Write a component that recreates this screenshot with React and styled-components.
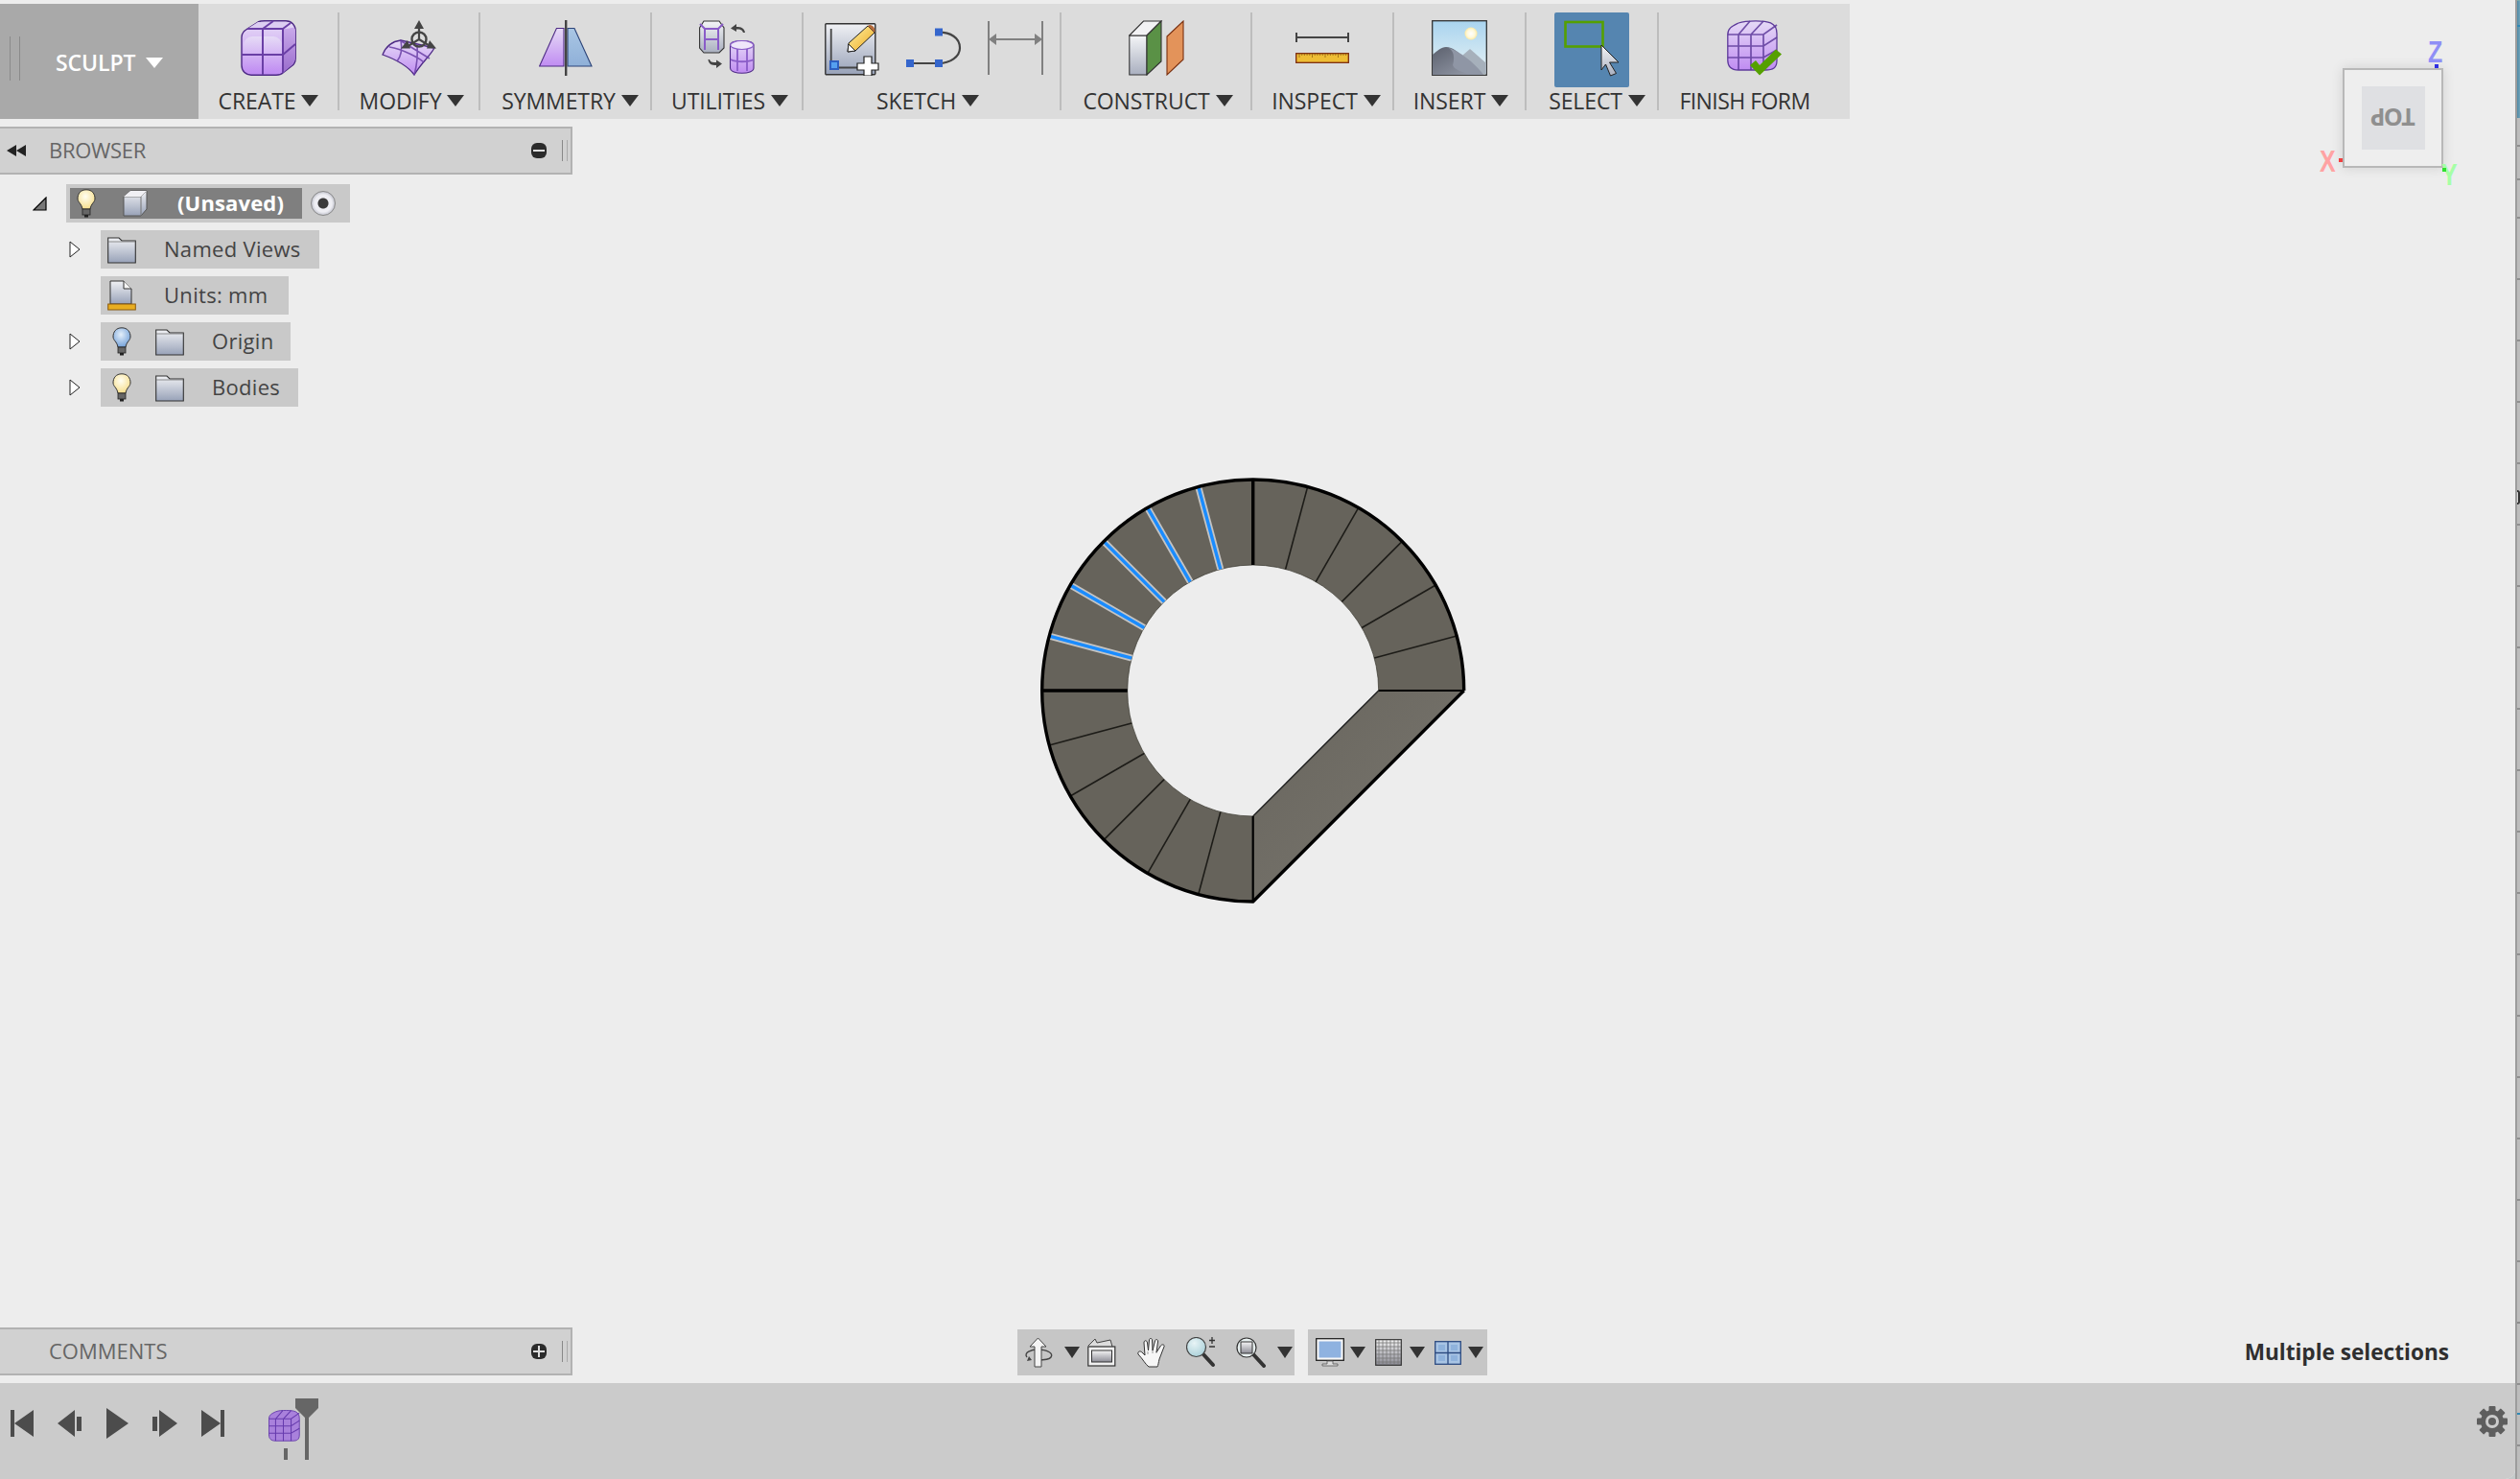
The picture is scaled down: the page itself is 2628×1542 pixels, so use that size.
import React from "react";
import styled, { createGlobalStyle } from "styled-components";

const Global = createGlobalStyle`
  html, body { margin: 0; padding: 0; background: #ededed; }
  #root { width: 2628px; height: 1542px; overflow: hidden; }
`;

const Page = styled.div`
  width: 2628px; height: 1542px; display: flex; background: #c4caca;
  font-family: "Open Sans", "Liberation Sans", sans-serif; color: #3c3c3c; overflow: hidden;
`;
const Main = styled.div`
  position: relative; width: 2623px; height: 1542px; flex: none; background: #ededed;
  display: flex; flex-direction: column; padding-top: 4px; box-sizing: border-box;
  border-bottom-right-radius: 10px; overflow: hidden;
`;
const Edge = styled.div`
  flex: 1; display: flex; flex-direction: column; border-left: 2px solid #9c9c9c;
`;
const EdgeCap = styled.div`
  height: 123px; flex: none; background: linear-gradient(90deg, #4f8aa6, #6ea2b8);
  border-top: 1px solid #7aa; box-sizing: border-box; position: relative;
  &::after { content: ""; position: absolute; left: 0; right: 0; top: 25px; height: 2px; background: #2f88b5; }
`;
const EdgeRest = styled.div`
  flex: 1; position: relative;
  background: repeating-linear-gradient(180deg, #bdbdbd 0 62px, #8f8f8f 62px 64px);
  background-position: 0 41px;
`;
const EdgeMark = styled.span`
  position: absolute; left: 0; right: 0; top: ${p => p.$y - 123}px; height: 2px; background: ${p => p.$c};
`;
const EdgeNotch = styled.span`
  position: absolute; left: 0; right: 0; top: ${511 - 123}px; height: 15px; box-sizing: border-box;
  border: 2px solid #333; border-left: 0; border-radius: 0 5px 5px 0; background: #d8d8d8;
`;

/* ---------- toolbar ---------- */
const Toolbar = styled.div`
  width: 1929px; height: 120px; flex: none; display: flex; background: #dcdcdc;
`;
const Sculpt = styled.div`
  width: 207px; height: 120px; flex: none; background: #a9a9a9; display: flex; align-items: center;
  color: #fff; font-size: 23px; font-weight: 600; padding-left: 10px; box-sizing: border-box;
`;
const Grip = styled.span`
  width: 9px; height: 46px; flex: none; margin-top: -6px; margin-right: 37px;
  border-left: 1px solid #8a8a8a; border-right: 1px solid #8a8a8a;
`;
const SculptLabel = styled.span`
  margin-top: 2px; letter-spacing: -0.1px; display: flex; align-items: center;
`;
const Caret = styled.span`
  display: inline-block; flex: none; width: 0; height: 0; margin-left: ${p => p.$ml ?? 6}px;
  border-left: ${p => p.$w / 2}px solid transparent; border-right: ${p => p.$w / 2}px solid transparent;
  border-top: ${p => p.$h}px solid ${p => p.$color || "#333"};
`;
const Group = styled.div`
  width: ${p => p.$w}px; height: 102px; margin-top: 9px; flex: none; box-sizing: border-box;
  display: flex; flex-direction: column; align-items: center;
  border-right: ${p => (p.$last ? "0" : "2px solid #bdbdbd")};
`;
const IconRow = styled.div`
  height: 78px; flex: none; display: flex; align-items: flex-start; gap: ${p => p.$gap || 0}px;
  padding-top: ${p => (p.$flush ? 0 : 8)}px; box-sizing: border-box;
  padding-left: ${p => p.$pl || 0}px;
  & > svg { display: block; flex: none; }
`;
const SelectBox = styled.div`
  width: 78px; height: 78px; background: #5585b0; border-radius: 2px;
  & > svg { display: block; }
`;
const Label = styled.div`
  height: 24px; line-height: 24px; font-size: 23px; color: #333; display: flex; align-items: center;
  white-space: nowrap; padding-right: ${p => p.$pr || 0}px; padding-left: ${p => p.$pl || 0}px;
  letter-spacing: ${p => p.$ls ?? -0.1}px; margin-top: 2px;
`;

/* ---------- panels ---------- */
const Panel = styled.div`
  width: 597px; height: 50px; flex: none; box-sizing: border-box; background: #d1d1d1;
  border: 2px solid #b2b2b2; border-left: 0; display: flex; align-items: center;
  margin-top: ${p => p.$mt || 0}px; color: #666; font-size: 22px;
`;
const PanelLead = styled.span`
  width: 51px; flex: none; display: flex; padding-left: 7px; box-sizing: border-box;
`;
const PanelTitle = styled.span`flex: 1; margin-top: -2px; letter-spacing: ${p => p.$ls || 0}px;`;
const PanelBtn = styled.span`
  width: 16px; height: 16px; border-radius: 6px; background: #2b2b2b; flex: none; margin-right: 16px; position: relative;
  &::before { content: ""; position: absolute; left: 2px; right: 2px; top: 7px; height: 2px; background: #ddd; }
  &::after { content: ""; position: absolute; top: 2px; bottom: 2px; left: 7px; width: 2px; background: #ddd; display: ${p => (p.$plus ? "block" : "none")}; }
`;
const PanelGrip = styled.span`
  width: 4px; height: 22px; flex: none; margin-right: 3px; border-left: 1px solid #888; border-right: 1px solid #aaa;
`;

const Tree = styled.div`
  margin-top: 10px; display: flex; flex-direction: column; gap: 8px; font-size: 22px;
`;
const TreeLine = styled.div`
  display: flex; align-items: center; height: 40px; padding-left: ${p => p.$pl}px;
`;
const Twisty = styled.span`
  width: ${p => p.$w}px; flex: none; display: flex;
  & > svg { display: block; }
`;
const RootRow = styled.div`
  width: 296px; height: 40px; background: #c9c9c9; display: flex; align-items: center; padding-left: 4px; box-sizing: border-box;
`;
const RootName = styled.div`
  width: 242px; height: 32px; background: #7f7f7f; color: #fff; font-weight: 700; display: flex; align-items: center; flex: none;
  padding-left: 2px; box-sizing: border-box;
  letter-spacing: 0.15px;
`;
const Row = styled.div`
  width: ${p => p.$w}px; height: 40px; background: #c9c9c9; display: flex; align-items: center;
  padding-left: 7px; box-sizing: border-box; color: #444; letter-spacing: 0.3px;
`;
const RowText = styled.span`margin-top: -2px;`;
const Slot = styled.span`
  width: 30px; flex: none; display: flex; justify-content: center; margin-right: ${p => p.$mr || 0}px;
  & > svg { display: block; }
`;
const Radio = styled.span`
  width: 26px; height: 26px; border-radius: 50%; flex: none; margin-left: 9px; box-sizing: border-box;
  background: radial-gradient(circle, #3a3a3a 0 5px, #eeeef3 6px 9px, #b9bbc6 13px); border: 1px solid #8a8a8a;
`;

/* ---------- bottom ---------- */
const BottomRow = styled.div`
  margin-top: auto; margin-bottom: 8px; display: flex; align-items: center; height: 50px; flex: none;
`;
const NavGroup = styled.div`
  width: ${p => p.$w}px; height: 48px; flex: none; background: #c6c6c6; display: flex; align-items: center;
  margin-left: ${p => p.$ml}px; margin-top: 2px;
`;
const NavItem = styled.span`
  flex: none; display: flex; margin-left: ${p => p.$ml}px;
  & > svg { display: block; }
`;
const Status = styled.div`
  margin-left: auto; padding-right: 69px; font-size: 22.6px; font-weight: 700; color: #2f2f2f; margin-top: 0;
`;
const Timeline = styled.div`
  height: 100px; flex: none; background: #cbcbcb; display: flex; align-items: flex-start;
  padding: 26px 8px 0 11px; box-sizing: border-box; gap: 25px;
  & > svg { display: block; flex: none; }
`;
const Marker = styled.svg`margin: -10px 0 0 21px;`;
const Gear = styled.svg`margin: -2px 0 0 auto;`;

/* ---------- canvas items ---------- */
const ModelSvg = styled.svg`position: absolute; left: 1060px; top: 480px;`;
const Cube = styled.div`
  position: absolute; left: 2443px; top: 71px; width: 105px; height: 104px; box-sizing: border-box;
  border: 2px solid #b8b8b8; background: #eeeeee; box-shadow: 0 0 12px rgba(0,0,0,.12);
  display: flex; align-items: center; justify-content: center;
`;
const CubeFace = styled.div`
  width: 66px; height: 66px; background: #dfe0e3; display: flex; align-items: center; justify-content: center;
  color: #8f8f8f; font-size: 25px; font-weight: 700; transform: rotate(180deg); letter-spacing: -1.5px;
  font-family: "Open Sans", sans-serif; line-height: 1;
`;
const Axis = styled.span`
  position: absolute; left: ${p => p.$x}px; top: ${p => p.$y}px; color: ${p => p.$c};
  font: 700 32px/1 "Liberation Sans", sans-serif; transform: scaleX(.78); transform-origin: 0 0;
`;
const Dot = styled.span`
  position: absolute; left: ${p => p.$x}px; top: ${p => p.$y}px; width: 4px; height: 4px; background: ${p => p.$c};
`;
const DefsSvg = styled.svg`position: absolute; width: 0; height: 0;`;

const Defs = () => (
  <DefsSvg>
    <defs>
      <linearGradient id="pg" x1="0" y1="0" x2="0" y2="1"><stop offset="0" stopColor="#e6dbf6" /><stop offset="1" stopColor="#c08cf2" /></linearGradient>
      <linearGradient id="pd" x1="0" y1="0" x2="0" y2="1"><stop offset="0" stopColor="#c9a9ea" /><stop offset="1" stopColor="#9a6ccd" /></linearGradient>
      <linearGradient id="bl" x1="0" y1="0" x2="0" y2="1"><stop offset="0" stopColor="#a9c6e4" /><stop offset="1" stopColor="#8fb0d8" /></linearGradient>
      <linearGradient id="sv" x1="0" y1="0" x2="0" y2="1"><stop offset="0" stopColor="#f4f5f7" /><stop offset="1" stopColor="#a9afbf" /></linearGradient>
      <linearGradient id="sk" x1="0" y1="0" x2="0" y2="1"><stop offset="0" stopColor="#a9d4ef" /><stop offset="1" stopColor="#e8f2f4" /></linearGradient>
      <linearGradient id="mt" x1="0" y1="0" x2="1" y2="1"><stop offset="0" stopColor="#5c616e" /><stop offset="1" stopColor="#9aa0ae" /></linearGradient>
      <linearGradient id="ye" x1="0" y1="0" x2="1" y2="1"><stop offset="0" stopColor="#fff4a8" /><stop offset="1" stopColor="#eea81e" /></linearGradient>
      <linearGradient id="gr" x1="0" y1="0" x2="0" y2="1"><stop offset="0" stopColor="#f4f4f4" /><stop offset="1" stopColor="#8c8c96" /></linearGradient>
      <linearGradient id="gd" x1="0" y1="0" x2="0" y2="1"><stop offset="0" stopColor="#f0f1f4" /><stop offset="1" stopColor="#98a2b8" /></linearGradient>
      <linearGradient id="ds" x1="0" y1="0" x2="1" y2="1"><stop offset="0" stopColor="#68655d" /><stop offset="1" stopColor="#7a7770" /></linearGradient>
      <radialGradient id="by" cx=".45" cy=".35" r=".7"><stop offset="0" stopColor="#fffef2" /><stop offset="1" stopColor="#f6dc84" /></radialGradient>
      <radialGradient id="bb" cx=".45" cy=".35" r=".7"><stop offset="0" stopColor="#e4effa" /><stop offset="1" stopColor="#6c9cd6" /></radialGradient>
      <radialGradient id="sun" cx=".5" cy=".5" r=".5"><stop offset="0" stopColor="#fff" /><stop offset=".65" stopColor="#fff8d8" /><stop offset="1" stopColor="#ffe9a0" /></radialGradient>
      <radialGradient id="gl" cx=".4" cy=".3" r=".8"><stop offset="0" stopColor="#e8f4f6" /><stop offset="1" stopColor="#a4cdd6" /></radialGradient>
    </defs>
  </DefsSvg>
);

/* ---------- toolbar icons ---------- */
const P = "#6a3fa6";
const CreateIcon = () => (
  <svg width="58" height="58" viewBox="0 0 58 58">
    <path d="M1 18C1 13 4 11 7 9L18 2C20 1 22 .8 25 .8H47C53 .8 57.2 5 57.2 11V40C57.2 44 56 46 53 48L44 55C42 57 40 57.2 37 57.2H11C5 57.2 1 53 1 47Z" fill="url(#pg)" stroke="#4d2a85" strokeWidth="1.4" />
    <path d="M44 9H47C52 9 57 5 57 11V40C57 44 50 50 44 55Z" fill="url(#pd)" />
    <path d="M7 9L18 2H50L44 9Z" fill="#dccdf2" />
    <rect x="3" y="17" width="40" height="38" rx="9" fill="url(#pg)" />
    <path d="M1 36H44L57 25M23 9V57M23 9L34 1M7 9H44V55M44 9L52 3" fill="none" stroke={P} strokeWidth="2" />
  </svg>
);
const ModifyIcon = () => (
  <svg width="57" height="58" viewBox="0 0 57 58">
    <path d="M1 36C5 26 12 22 20 21L55 29C50 38 41 45 34 57C26 46 12 40 1 36Z" fill="url(#pg)" stroke="#4d2a85" strokeWidth="1.3" />
    <path d="M20 21C22 32 20 38 16 43M37 25C38 40 36 50 34 57M8 28C22 30 40 40 44 44M19 21L50 40" fill="none" stroke={P} strokeWidth="1.6" opacity=".85" />
    <circle cx="39" cy="20" r="7.5" fill="none" stroke="#444" strokeWidth="2.4" />
    <path d="M39 6V20L26 28M39 20L52 28" fill="none" stroke="#444" strokeWidth="2.2" />
    <path d="M39 0L44 9H34ZM20 29.5L30 29.5L27 21ZM57 29.5L47 29.5L50 21Z" fill="#444" />
  </svg>
);
const SymmetryIcon = () => (
  <svg width="56" height="58" viewBox="0 0 56 58">
    <path d="M.6 48L18.4 8.5H26V48Z" fill="url(#pg)" stroke="#4d2a85" strokeWidth="1.1" />
    <path d="M30 8.5H37L55 48H30Z" fill="url(#bl)" stroke="#2b4378" strokeWidth="1.1" />
    <rect x="27" width="2.4" height="58" fill="#444" />
  </svg>
);
const UtilitiesIcon = () => (
  <svg width="58" height="56" viewBox="0 0 58 56">
    <path d="M5 1H21L26 8V29L21 34H5L.6 29V8Z" fill="url(#sv)" stroke="#333" strokeWidth="1.1" />
    <path d="M6 9H20V31M6 9V31M6 20H20M1 4L6 9M25 4L20 9" fill="none" stroke="#8a5cc8" strokeWidth="2" />
    <path d="M39 4L33 8.5L39 12V9.5C43 9.5 45 10 46 13H48C47 8 44 7 39 7Z" fill="#444" />
    <path d="M18 50L24 45.5L18 41.5V44C14 44 12 44 11 41H9.5C10 46 13 47 18 47Z" fill="#444" />
    <path d="M32.5 26C32.5 20 57 20 57 26V50C57 57 32.5 57 32.5 50Z" fill="url(#pg)" stroke="#4d2a85" strokeWidth="1.1" />
    <ellipse cx="44.7" cy="26" rx="12" ry="4.5" fill="#efe6fa" stroke="#8a5cc8" strokeWidth="1.2" />
    <path d="M40 30V53M50 30V53M33 41C38 44 52 44 57 41" fill="none" stroke="#8a5cc8" strokeWidth="1.8" />
  </svg>
);
const SketchIcon = () => (
  <svg width="58" height="58" viewBox="0 -3 58 58">
    <rect x=".8" y=".8" width="52" height="53" rx="1" fill="url(#gd)" stroke="#333" strokeWidth="1.4" />
    <path d="M6.7 6V46.5H36" fill="none" stroke="#444" strokeWidth="1.8" />
    <rect x="6" y="40" width="8" height="8" fill="#55a0f0" stroke="#2f5fc0" strokeWidth="2" />
    <path d="M24 30L25 21L45 3L52 10L32 29Z" fill="url(#ye)" stroke="#222" strokeWidth="1" />
    <path d="M24 30L25 22L32 29Z" fill="#fff" stroke="#222" strokeWidth="1" />
    <path d="M45 3C48 0 54 5 52 10Z" fill="#b46a3a" />
    <path d="M41 35H49V42H56V49H49V55H41V49H34V42H41Z" fill="#fff" stroke="#222" strokeWidth="1.2" />
  </svg>
);
const LineIcon = () => (
  <svg width="58" height="58" viewBox="0 0 58 58">
    <path d="M4 45H34M34 12.7C46 12.7 56 18 56 29C56 38 46 45 34 45" fill="none" stroke="#444" strokeWidth="2.2" />
    <rect x="0" y="41" width="8" height="8" fill="#3566cc" />
    <rect x="30" y="41" width="8" height="8" fill="#3566cc" />
    <rect x="30" y="8.5" width="8" height="8" fill="#3566cc" />
  </svg>
);
const DimensionIcon = () => (
  <svg width="58" height="58" viewBox="0 0 58 58">
    <path d="M1 1V57M57 1V57M6 20H52" fill="none" stroke="#808080" strokeWidth="2" />
    <path d="M1 20L9 14V26ZM57 20L49 14V26Z" fill="#808080" />
  </svg>
);
const ConstructIcon = () => (
  <svg width="58" height="58" viewBox="0 0 58 58">
    <path d="M.8 16V57H19V16Z" fill="url(#sv)" stroke="#333" strokeWidth="1.1" />
    <path d="M.8 16L15.5 1H34L19 16Z" fill="#f2f2f4" stroke="#333" strokeWidth="1.1" />
    <path d="M19 16L34 1V43L19 57Z" fill="#5a9146" stroke="#333" strokeWidth="1.1" />
    <path d="M40 17L57 1V41L40 57Z" fill="#e3935a" stroke="#7a3010" strokeWidth="1.1" />
  </svg>
);
const InspectIcon = () => (
  <svg width="56" height="58" viewBox="0 0 56 58">
    <path d="M1 13V23M1 18H55M55 13V23" fill="none" stroke="#444" strokeWidth="2" />
    <rect x=".7" y="34.7" width="54.6" height="9.6" fill="#eebd35" stroke="#7a2a10" strokeWidth="1.3" />
    <path d={Array.from({ length: 19 }, (_, i) => `M${4 + i * 2.7} 35V${i % 5 === 0 ? 39 : 37}`).join("")} stroke="#8a5a10" strokeWidth=".7" />
  </svg>
);
const InsertIcon = () => (
  <svg width="58" height="58" viewBox="0 0 58 58">
    <rect x=".7" y=".7" width="56.6" height="56.6" fill="url(#sk)" stroke="#333" strokeWidth="1.3" />
    <circle cx="41" cy="14" r="6.5" fill="url(#sun)" />
    <path d="M26 42L40 30L57 45V56H30Z" fill="#a6b0bb" />
    <path d="M1 36C6 32 10 28 15 28C22 28 28 34 33 38C44 46 50 52 54 57H1Z" fill="url(#mt)" />
    <path d="M15 28C24 30 24 40 22 47C24 52 32 54 40 57H54C46 46 30 32 15 28Z" fill="#8f96a5" />
  </svg>
);
const SelectIcon = () => (
  <svg width="78" height="78" viewBox="0 0 78 78">
    <rect x="11.5" y="10" width="39" height="25.5" fill="none" stroke="#55a000" strokeWidth="2.6" />
    <path d="M49 34L67 52H57.5L64.5 63.5L58.5 66L53.5 54L49 60Z" fill="url(#sv)" stroke="#222" strokeWidth="1" />
  </svg>
);
const FormBody = ({ fill = "url(#pg)", stroke = "#5d3a9a" }) => (
  <>
    <path d="M.8 15C.8 8 6 6 12 3C18 .8 22 .8 30 .8C42 .8 52 2 52 14V42C52 50 48 52 40 52H12C4 52 .8 48 .8 42Z" fill={fill} stroke={stroke} strokeWidth="1.3" />
    <path d="M.8 15H38L52 5M12 15V52M25 15V52M38 15V52M.8 27H38L52 18M.8 39H38L52 31M12 15L24 1M25 15L38 1" fill="none" stroke={stroke} strokeWidth="1.7" opacity=".85" />
  </>
);
const FinishIcon = () => (
  <svg width="58" height="58" viewBox="0 0 58 58">
    <FormBody />
    <path d="M24 47L34 57.5L57 35.5L51 30.5L34 47L30 42Z" fill="#55a000" />
  </svg>
);

/* ---------- tree icons ---------- */
const Bulb = ({ fill }) => (
  <svg width="20" height="30" viewBox="0 0 20 30">
    <path d="M10 .8C4 .8 1 5 1 10C1 14 5 15 6 21H14C15 15 19 14 19 10C19 5 16 .8 10 .8Z" fill={fill} stroke="#333" strokeWidth="1" />
    <rect x="6" y="21" width="8" height="6" fill="#666" stroke="#222" strokeWidth=".8" />
    <rect x="8" y="27" width="4" height="2.5" fill="#222" />
  </svg>
);
const Folder = () => (
  <svg width="30" height="30" viewBox="0 0 30 30">
    <path d="M.7 3H12L15 6H29.3V29H.7Z" fill="url(#gd)" stroke="#333" strokeWidth="1.1" />
    <path d="M.7 7H29" stroke="#777" strokeWidth=".8" />
  </svg>
);
const DocIcon = () => (
  <svg width="30" height="32" viewBox="0 0 30 32">
    <path d="M3 1H17L25 9V25H3Z" fill="url(#gd)" stroke="#333" strokeWidth="1" />
    <path d="M17 1V9H25" fill="#f4f4f4" stroke="#333" strokeWidth="1" />
    <rect x=".7" y="25" width="28.6" height="6" fill="#e8ad20" stroke="#8a5a10" strokeWidth="1" />
  </svg>
);
const SmallCube = () => (
  <svg width="26" height="28" viewBox="0 0 26 28">
    <path d="M1 7L8 1H25V20L19 27H1Z" fill="url(#gd)" stroke="#555" strokeWidth="1" />
    <path d="M1 7H19V27M19 7L25 1" fill="none" stroke="#777" strokeWidth="1" />
    <path d="M1 7L8 1H25L19 7Z" fill="#f0f0f4" />
  </svg>
);
const TriOpen = () => (
  <svg width="15" height="15" viewBox="0 0 15 15">
    <path d="M1 14L14 1V14Z" fill="#777" stroke="#000" strokeWidth="1.2" />
  </svg>
);
const TriClosed = () => (
  <svg width="12" height="18" viewBox="0 0 12 18">
    <path d="M1 1L11 9L1 17Z" fill="#fff" stroke="#222" strokeWidth="1" />
  </svg>
);

/* ---------- nav icons ---------- */
const NavCaret = () => (
  <svg width="20" height="14" viewBox="0 0 20 14"><path d="M2 1H18L10 13Z" fill="#333" /></svg>
);
const OrbitIcon = () => (
  <svg width="30" height="32" viewBox="0 0 30 32">
    <path d="M3 21C-1 16 8 13 14 13C24 13 31 17 28 21C26 24 18 24 14 24" fill="none" stroke="#444" strokeWidth="1.4" />
    <path d="M14.5 1L23 10H18V31H11V10H6Z" fill="#f4f4f4" stroke="#444" strokeWidth="1" />
    <path d="M5 20L8 24L3 25Z" fill="#444" />
  </svg>
);
const CameraIcon = () => (
  <svg width="30" height="30" viewBox="0 0 30 30">
    <path d="M1 8L8 1L10 5L24 2L26 9" fill="#ddd" stroke="#444" strokeWidth="1" />
    <rect x=".8" y="9" width="28" height="20" fill="#f0f0f0" stroke="#333" strokeWidth="1.2" />
    <rect x="4.5" y="13" width="21" height="12" fill="url(#gr)" stroke="#333" strokeWidth="1" />
  </svg>
);
const HandIcon = () => (
  <svg width="30" height="31" viewBox="0 0 30 31">
    <path d="M12 30C8 27 6 22 1 17C0 14 3 13 5 15L8 18L7 5C7 2 10 2 10.5 5L11.5 13L12.5 2C12.5 0 15.5 0 15.5 2L16 13L18.5 3C19 1 22 1 21.5 4L20 15L24.5 8C26 6 29 7 28 9L23 22C22 26 22 28 21 30Z" fill="#f6f6f6" stroke="#333" strokeWidth="1" />
    <path d="M11 17V14M16 16V13M20 16V14" stroke="#888" strokeWidth=".8" />
  </svg>
);
const ZoomIcon = () => (
  <svg width="32" height="32" viewBox="0 0 32 32">
    <path d="M17 17L28 29" stroke="#333" strokeWidth="4" strokeLinecap="round" />
    <circle cx="10.5" cy="10.5" r="10" fill="url(#gl)" stroke="#444" strokeWidth="1.2" />
    <path d="M27 0V7M24 3.5H30M24 10H30" stroke="#333" strokeWidth="1.3" />
  </svg>
);
const ZoomWinIcon = () => (
  <svg width="32" height="32" viewBox="0 0 32 32">
    <path d="M18 18L29 30" stroke="#333" strokeWidth="4" strokeLinecap="round" />
    <circle cx="11" cy="11" r="10" fill="#e8f0f0" stroke="#333" strokeWidth="1.2" />
    <rect x="5" y="5" width="12" height="12" fill="url(#gr)" stroke="#333" strokeWidth="1" />
  </svg>
);
const MonitorIcon = () => (
  <svg width="30" height="30" viewBox="0 0 30 30">
    <rect x=".7" y=".7" width="28.6" height="22.6" fill="#f8f8f8" stroke="#222" strokeWidth="1.3" />
    <rect x="3.5" y="3.5" width="23" height="17" fill="#8fb2e0" />
    <path d="M12 24H18V27H23V29H7V27H12Z" fill="#ddd" stroke="#555" strokeWidth=".8" />
  </svg>
);
const GridIcon = () => (
  <svg width="28" height="28" viewBox="0 0 28 28">
    <rect x=".7" y=".7" width="26.6" height="26.6" fill="url(#gr)" stroke="#333" strokeWidth="1.2" />
    <path d={Array.from({ length: 6 }, (_, i) => `M${4 + i * 4} 1V27M1 ${4 + i * 4}H27`).join("")} stroke="#777" strokeWidth=".8" />
  </svg>
);
const ViewsIcon = () => (
  <svg width="28" height="25" viewBox="0 0 28 25">
    <rect x=".7" y=".7" width="26.6" height="23.6" fill="#a8c4e4" stroke="#2c4a80" strokeWidth="1.3" />
    <path d="M14 1V24M1 12.5H27" stroke="#2c4a80" strokeWidth="1.3" />
    <rect x="4" y="4" width="7" height="6" fill="#8fb2dc" />
    <rect x="17" y="4" width="7" height="6" fill="#8fb2dc" />
    <rect x="4" y="15" width="7" height="6" fill="#8fb2dc" />
    <rect x="17" y="15" width="7" height="6" fill="#8fb2dc" />
  </svg>
);

/* ---------- model ---------- */
const CX = 246.7, CY = 240, RO = 220, RI = 131;
const spoke = deg => {
  const a = (deg * Math.PI) / 180;
  return [CX + RI * Math.sin(a), CY - RI * Math.cos(a), CX + RO * Math.sin(a), CY - RO * Math.cos(a)];
};
const thin = [15, 30, 45, 60, 75, 195, 210, 225, 240, 255];
const blue = [-15, -30, -45, -60, -75];
const Model = () => (
  <ModelSvg width="480" height="480" viewBox="0 0 480 480">
    <path d={`M${CX + RO} ${CY}A${RO} ${RO} 0 1 0 ${CX} ${CY + RO}L${CX} ${CY + RI}A${RI} ${RI} 0 1 1 ${CX + RI} ${CY}Z`} fill="#66635b" />
    <path d={`M${CX + RI} ${CY}L${CX + RO} ${CY}L${CX} ${CY + RO}L${CX} ${CY + RI}Z`} fill="url(#ds)" />
    <path d={`M${CX + RI} ${CY}A${RI} ${RI} 0 1 0 ${CX} ${CY + RI}`} fill="none" stroke="#39372f" strokeWidth="1" opacity=".7" />
    <path d={`M${CX + RI} ${CY}L${CX} ${CY + RI}`} stroke="#222" strokeWidth="1.5" />
    {thin.map(d => {
      const [a, b, c, e] = spoke(d);
      return <line key={d} x1={a} y1={b} x2={c} y2={e} stroke="#1d1c18" strokeWidth="1.6" />;
    })}
    {blue.map(d => {
      const [a, b, c, e] = spoke(d);
      return (
        <g key={d}>
          <line x1={a} y1={b} x2={c} y2={e} stroke="#c4c4c4" strokeWidth="7" />
          <line x1={a} y1={b} x2={c} y2={e} stroke="#1a8cff" strokeWidth="3.4" />
        </g>
      );
    })}
    <path d={`M${CX} ${CY - RI}V${CY - RO}M${CX - RI} ${CY}H${CX - RO}`} stroke="#000" strokeWidth="3.4" />
    <path d={`M${CX + RI} ${CY}H${CX + RO}M${CX} ${CY + RI}V${CY + RO}`} stroke="#000" strokeWidth="2.2" />
    <path d={`M${CX + RO} ${CY}A${RO} ${RO} 0 1 0 ${CX} ${CY + RO}L${CX + RO} ${CY}`} fill="none" stroke="#000" strokeWidth="3.4" strokeLinejoin="round" />
  </ModelSvg>
);

const tools = [
  { name: "CREATE", w: 147, lpl: 1, icons: <CreateIcon />, caret: true },
  { name: "MODIFY", w: 147, lpl: 6, icons: <ModifyIcon />, caret: true },
  { name: "SYMMETRY", w: 179, lpl: 10, icons: <SymmetryIcon />, caret: true },
  { name: "UTILITIES", w: 158, lpl: 6, icons: <UtilitiesIcon />, caret: true },
  { name: "SKETCH", w: 269, gap: 27, pl: 4, lpr: 8, caret: true, icons: <><SketchIcon /><LineIcon /><DimensionIcon /></> },
  { name: "CONSTRUCT", w: 199, lpl: 4, icons: <ConstructIcon />, caret: true },
  { name: "INSPECT", w: 148, lpl: 8, icons: <InspectIcon />, caret: true },
  { name: "INSERT", w: 138, lpl: 3, icons: <InsertIcon />, caret: true },
  { name: "SELECT", w: 138, lpl: 11, select: true, caret: true, icons: <SelectIcon /> },
  { name: "FINISH FORM", w: 199, lpr: 20, ls: -0.55, last: true, icons: <FinishIcon /> },
];

export default function App() {
  return (
    <Page>
      <Global />
      <Defs />
      <Main>
        <Toolbar>
          <Sculpt>
            <Grip />
            <SculptLabel>SCULPT<Caret $w={18} $h={11} $color="#fff" $ml={11} /></SculptLabel>
          </Sculpt>
          {tools.map(t => (
            <Group key={t.name} $w={t.w} $last={t.last}>
              {t.select ? (
                <IconRow $flush><SelectBox>{t.icons}</SelectBox></IconRow>
              ) : (
                <IconRow $gap={t.gap} $pl={t.pl}>{t.icons}</IconRow>
              )}
              <Label $pl={t.lpl} $pr={t.lpr} $ls={t.ls}>
                {t.name}
                {t.caret && <Caret $w={18} $h={12} />}
              </Label>
            </Group>
          ))}
        </Toolbar>

        <Panel $mt={8}>
          <PanelLead>
            <svg width="20" height="12" viewBox="0 0 20 12"><path d="M0 6L10 0V12ZM10 6L20 0V12Z" fill="#222" /></svg>
          </PanelLead>
          <PanelTitle $ls={-0.3}>BROWSER</PanelTitle>
          <PanelBtn />
          <PanelGrip />
        </Panel>

        <Tree>
          <TreeLine $pl={34}>
            <Twisty $w={35}><TriOpen /></Twisty>
            <RootRow>
              <RootName>
                <Slot $mr={21}><Bulb fill="url(#by)" /></Slot>
                <Slot $mr={29}><SmallCube /></Slot>
                <RowText>(Unsaved)</RowText>
              </RootName>
              <Radio />
            </RootRow>
          </TreeLine>
          <TreeLine $pl={72}>
            <Twisty $w={33}><TriClosed /></Twisty>
            <Row $w={228}><Slot $mr={29}><Folder /></Slot><RowText>Named Views</RowText></Row>
          </TreeLine>
          <TreeLine $pl={72}>
            <Twisty $w={33} />
            <Row $w={196}><Slot $mr={29}><DocIcon /></Slot><RowText>Units: mm</RowText></Row>
          </TreeLine>
          <TreeLine $pl={72}>
            <Twisty $w={33}><TriClosed /></Twisty>
            <Row $w={198}><Slot $mr={20}><Bulb fill="url(#bb)" /></Slot><Slot $mr={29}><Folder /></Slot><RowText>Origin</RowText></Row>
          </TreeLine>
          <TreeLine $pl={72}>
            <Twisty $w={33}><TriClosed /></Twisty>
            <Row $w={206}><Slot $mr={20}><Bulb fill="url(#by)" /></Slot><Slot $mr={29}><Folder /></Slot><RowText>Bodies</RowText></Row>
          </TreeLine>
        </Tree>

        <Model />

        <Cube><CubeFace>TOP</CubeFace></Cube>
        <Axis $x={2532} $y={38} $c="#8f8ff6">Z</Axis>
        <Axis $x={2419} $y={152} $c="#ffa3a3">X</Axis>
        <Axis $x={2546} $y={166} $c="#a6ffa6">Y</Axis>
        <Dot $x={2439} $y={165} $c="#f04040" />
        <Dot $x={2539} $y={67} $c="#3030e0" />
        <Dot $x={2547} $y={175} $c="#30e030" />

        <BottomRow>
          <Panel>
            <PanelLead />
            <PanelTitle>COMMENTS</PanelTitle>
            <PanelBtn $plus />
            <PanelGrip />
          </Panel>
          <NavGroup $w={289} $ml={464}>
            <NavItem $ml={7}><OrbitIcon /></NavItem>
            <NavItem $ml={10}><NavCaret /></NavItem>
            <NavItem $ml={6}><CameraIcon /></NavItem>
            <NavItem $ml={22}><HandIcon /></NavItem>
            <NavItem $ml={21}><ZoomIcon /></NavItem>
            <NavItem $ml={20}><ZoomWinIcon /></NavItem>
            <NavItem $ml={9}><NavCaret /></NavItem>
          </NavGroup>
          <NavGroup $w={187} $ml={14}>
            <NavItem $ml={8}><MonitorIcon /></NavItem>
            <NavItem $ml={4}><NavCaret /></NavItem>
            <NavItem $ml={8}><GridIcon /></NavItem>
            <NavItem $ml={6}><NavCaret /></NavItem>
            <NavItem $ml={8}><ViewsIcon /></NavItem>
            <NavItem $ml={5}><NavCaret /></NavItem>
          </NavGroup>
          <Status>Multiple selections</Status>
        </BottomRow>

        <Timeline>
          <svg width="24" height="32" viewBox="0 0 24 32"><path d="M0 2H4V30H0ZM4 16L24 2V30Z" fill="#4c4c4c" /></svg>
          <svg width="26" height="32" viewBox="0 0 26 32"><path d="M0 16L18 2V30ZM20 9H25V24H20Z" fill="#4c4c4c" /></svg>
          <svg width="23" height="32" viewBox="0 0 23 32"><path d="M0 0L23 16L0 32Z" fill="#4c4c4c" /></svg>
          <svg width="26" height="32" viewBox="0 0 26 32"><path d="M0 9H5V24H0ZM7 2L26 16L7 30Z" fill="#4c4c4c" /></svg>
          <svg width="24" height="32" viewBox="0 0 24 32"><path d="M0 2L20 16L0 30ZM20 2H24V30H20Z" fill="#4c4c4c" /></svg>
          <Marker width="52" height="64" viewBox="0 0 52 64">
            <g transform="translate(0 12) scale(.62)"><FormBody fill="#a981dc" stroke="#5b2fa6" /></g>
            <rect x="16" y="52" width="4" height="12" fill="#666" />
            <path d="M28 0H52V10L42 20V64H38V20L28 10Z" fill="#666" />
          </Marker>
          <Gear width="32" height="32" viewBox="0 0 32 32">
            <g fill="#5e5e5e">
              {[0, 45, 90, 135].map(r => <rect key={r} x="12.5" y="0" width="7" height="32" rx="1" transform={`rotate(${r} 16 16)`} />)}
              <circle cx="16" cy="16" r="12" />
            </g>
            <circle cx="16" cy="16" r="7" fill="#cbcbcb" />
            <circle cx="16" cy="16" r="4" fill="#5e5e5e" />
          </Gear>
        </Timeline>
      </Main>
      <Edge>
        <EdgeCap />
        <EdgeRest>
          <EdgeMark $y={186} $c="#8f8f8f" />
          <EdgeNotch />
          <EdgeMark $y={1473} $c="#2f88b5" />
        </EdgeRest>
      </Edge>
    </Page>
  );
}
